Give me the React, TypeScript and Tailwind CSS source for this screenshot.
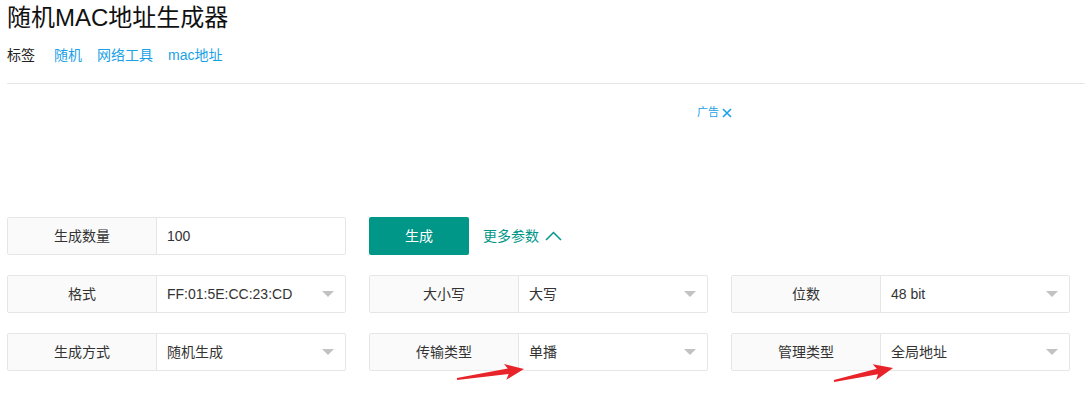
const font = { fontFamily: '"Liberation Sans", "Noto Sans CJK SC", sans-serif' };

function Field({ label, value, select = true }: { label: string; value: string; select?: boolean }) {
  return (
    <div className="flex h-[38px] w-[339px] rounded-[2px] border border-[#e6e6e6] bg-white text-[14px] text-[#333]">
      <div className="flex w-[149px] shrink-0 items-center justify-center border-r border-[#e6e6e6] bg-[#fafafa]">
        {label}
      </div>
      <div className="flex flex-1 items-center justify-between pl-[10px] pr-[11px]">
        <span>{value}</span>
        {select && (
          <span className="h-0 w-0 border-x-[6px] border-t-[6px] border-x-transparent border-t-[#c2c2c2]" />
        )}
      </div>
    </div>
  );
}

function arrowPoints(x1: number, y1: number, x2: number, y2: number) {
  const len = Math.hypot(x2 - x1, y2 - y1);
  const dx = (x2 - x1) / len;
  const dy = (y2 - y1) / len;
  const nx = -dy;
  const ny = dx;
  const p = (along: number, side: number) =>
    `${(x1 + dx * along + nx * side).toFixed(1)},${(y1 + dy * along + ny * side).toFixed(1)}`;
  const neck = len - 16;
  return [
    p(0, -1),
    p(neck, -2.8),
    p(neck - 3, -8),
    p(len, 0),
    p(neck - 3, 8),
    p(neck, 2.8),
    p(0, 1),
  ].join(' ');
}

export default function App() {
  return (
    <div className="relative min-h-[397px] w-[1085px] overflow-hidden bg-white" style={font}>
      <div className="pl-[7px]">
        <h1 className="pt-[2px] text-[24px] leading-[32px] text-[#111]">随机MAC地址生成器</h1>
        <div className="mt-[11px] flex items-center gap-[15px] text-[14px] leading-[20px]">
          <span className="mr-[4px] text-[#222]">标签</span>
          <a className="text-[#1aa1e6]">随机</a>
          <a className="text-[#1aa1e6]">网络工具</a>
          <a className="text-[#1aa1e6]">mac地址</a>
        </div>
        <div className="mt-[18px] border-t border-[#e6e6e6]" />

        {/* ad slot */}
        <div className="h-[133px] pt-[20px]">
          <div className="ml-[690px] flex items-center gap-[3px] text-[11px] leading-[16px] text-[#1aa1e6]">
            <span>广告</span>
            <svg width="10" height="10" viewBox="0 0 10 10" className="mt-[1px]">
              <path d="M1 1 L9 9 M9 1 L1 9" stroke="#1aa1e6" strokeWidth="1.6" fill="none" />
            </svg>
          </div>
        </div>

        <div className="flex flex-col gap-[20px]">
          <div className="flex items-center gap-[23px]">
            <Field label="生成数量" value="100" select={false} />
            <div className="flex items-center gap-[14px]">
              <button className="h-[38px] w-[100px] rounded-[2px] bg-[#009688] text-[14px] text-white">生成</button>
              <span className="flex items-center gap-[6px] text-[14px] text-[#009688]">
                更多参数
                <svg width="17" height="10" viewBox="0 0 17 10" className="mb-[1px]">
                  <path d="M1 9 L8.5 1.5 L16 9" stroke="#009688" strokeWidth="1.5" fill="none" />
                </svg>
              </span>
            </div>
          </div>
          <div className="flex gap-[23px]">
            <Field label="格式" value="FF:01:5E:CC:23:CD" />
            <Field label="大小写" value="大写" />
            <Field label="位数" value="48 bit" />
          </div>
          <div className="flex gap-[23px]">
            <Field label="生成方式" value="随机生成" />
            <Field label="传输类型" value="单播" />
            <Field label="管理类型" value="全局地址" />
          </div>
        </div>
      </div>

      {/* annotation arrows */}
      <svg className="pointer-events-none absolute inset-0" width="1085" height="397">
        <polygon points={arrowPoints(457, 379, 524, 369)} fill="#e8232a" />
        <polygon points={arrowPoints(834, 381, 893, 368)} fill="#e8232a" />
      </svg>
    </div>
  );
}
